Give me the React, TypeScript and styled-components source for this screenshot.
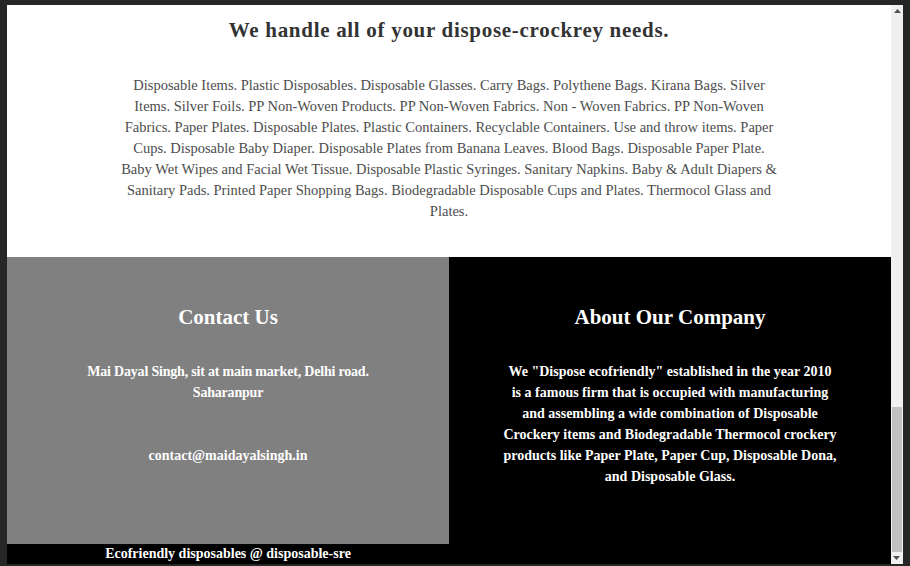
import React from "react";
import styled, { createGlobalStyle } from "styled-components";

const Global = createGlobalStyle`
  html, body { margin: 0; padding: 0; }
  body {
    background: #262626;
    font-family: "Liberation Serif", "DejaVu Serif", serif;
  }
`;

const Frame = styled.div`
  box-sizing: border-box;
  width: 910px;
  height: 566px;
  padding: 5px 7px 2px 7px;
  display: flex;
  overflow: hidden;
`;

const Page = styled.div`
  flex: 1;
  display: flex;
  flex-direction: column;
  min-width: 0;
`;

const Intro = styled.section`
  background: #ffffff;
  height: 252px;
  box-sizing: border-box;
  padding-top: 12px;
  display: flex;
  flex-direction: column;
  align-items: center;
`;

const IntroTitle = styled.h2`
  margin: 0;
  font-size: 21px;
  line-height: 26px;
  font-weight: 700;
  letter-spacing: 0.7px;
  color: #333333;
`;

const IntroText = styled.p`
  margin: 32px 0 0;
  width: 700px;
  text-align: center;
  font-size: 14.5px;
  line-height: 21px;
  color: #4d4d4d;
`;

const Footer = styled.div`
  flex: 1;
  display: grid;
  grid-template-columns: 442px 1fr;
  background: #000000;
`;

const LeftCol = styled.div`
  display: flex;
  flex-direction: column;
`;

const Panel = styled.div<{ $bg: string }>`
  background: ${(p) => p.$bg};
  flex: 1;
  box-sizing: border-box;
  padding: 47px 0 0;
  display: flex;
  flex-direction: column;
  align-items: center;
  text-align: center;
  color: #ffffff;
`;

const PanelTitle = styled.h3`
  margin: 0;
  font-size: 21px;
  line-height: 26px;
  font-weight: 700;
`;

const PanelText = styled.p<{ $mt: number; $ls?: number }>`
  margin: ${(p) => p.$mt}px 0 0;
  width: 360px;
  font-size: 14px;
  line-height: 21px;
  font-weight: 700;
  letter-spacing: ${(p) => p.$ls ?? 0}px;
`;

const Credit = styled.div`
  height: 20px;
  background: #000000;
  color: #ffffff;
  text-align: center;
  font-size: 14px;
  line-height: 20px;
  font-weight: 700;
`;

const Scrollbar = styled.div`
  width: 12px;
  background: #f0f0f0;
  display: flex;
  flex-direction: column;
  align-items: center;
`;

const Arrow = styled.div<{ $down?: boolean }>`
  height: 12px;
  width: 12px;
  display: flex;
  align-items: center;
  justify-content: center;
  flex-shrink: 0;
  transform: ${(p) => (p.$down ? "rotate(180deg)" : "none")};
`;

const Track = styled.div`
  flex: 1;
  width: 100%;
  display: flex;
  flex-direction: column;
  justify-content: flex-end;
`;

const Thumb = styled.div`
  height: 145px;
  margin: 0 1px;
  background: #c1c1c1;
`;

const ArrowIcon = () => (
  <svg width="7" height="4" viewBox="0 0 7 4">
    <path d="M3.5 0 L7 4 L0 4 Z" fill="#505050" />
  </svg>
);

const Lines = ({ lines }: { lines: string[] }) => (
  <>
    {lines.map((line, i) => (
      <React.Fragment key={i}>
        {line}
        {i < lines.length - 1 && <br />}
      </React.Fragment>
    ))}
  </>
);

const introLines = [
  "Disposable Items. Plastic Disposables. Disposable Glasses. Carry Bags. Polythene Bags. Kirana Bags. Silver",
  "Items. Silver Foils. PP Non-Woven Products. PP Non-Woven Fabrics. Non - Woven Fabrics. PP Non-Woven",
  "Fabrics. Paper Plates. Disposable Plates. Plastic Containers. Recyclable Containers. Use and throw items. Paper",
  "Cups. Disposable Baby Diaper. Disposable Plates from Banana Leaves. Blood Bags. Disposable Paper Plate.",
  "Baby Wet Wipes and Facial Wet Tissue. Disposable Plastic Syringes. Sanitary Napkins. Baby & Adult Diapers &",
  "Sanitary Pads. Printed Paper Shopping Bags. Biodegradable Disposable Cups and Plates. Thermocol Glass and",
  "Plates.",
];

const contactLines = ["Mai Dayal Singh, sit at main market, Delhi road.", "Saharanpur"];

const aboutLines = [
  'We "Dispose ecofriendly" established in the year 2010',
  "is a famous firm that is occupied with manufacturing",
  "and assembling a wide combination of Disposable",
  "Crockery items and Biodegradable Thermocol crockery",
  "products like Paper Plate, Paper Cup, Disposable Dona,",
  "and Disposable Glass.",
];

export default function App() {
  return (
    <>
      <Global />
      <Frame>
        <Page>
          <Intro>
            <IntroTitle>We handle all of your dispose-crockrey needs.</IntroTitle>
            <IntroText>
              <Lines lines={introLines} />
            </IntroText>
          </Intro>
          <Footer>
            <LeftCol>
              <Panel $bg="#808080">
                <PanelTitle>Contact Us</PanelTitle>
                <PanelText $mt={31} $ls={-0.2}>
                  <Lines lines={contactLines} />
                </PanelText>
                <PanelText $mt={42}>contact@maidayalsingh.in</PanelText>
              </Panel>
              <Credit>Ecofriendly disposables @ disposable-sre</Credit>
            </LeftCol>
            <Panel $bg="#000000">
              <PanelTitle>About Our Company</PanelTitle>
              <PanelText $mt={31}>
                <Lines lines={aboutLines} />
              </PanelText>
            </Panel>
          </Footer>
        </Page>
        <Scrollbar>
          <Arrow><ArrowIcon /></Arrow>
          <Track>
            <Thumb />
          </Track>
          <Arrow $down><ArrowIcon /></Arrow>
        </Scrollbar>
      </Frame>
    </>
  );
}
